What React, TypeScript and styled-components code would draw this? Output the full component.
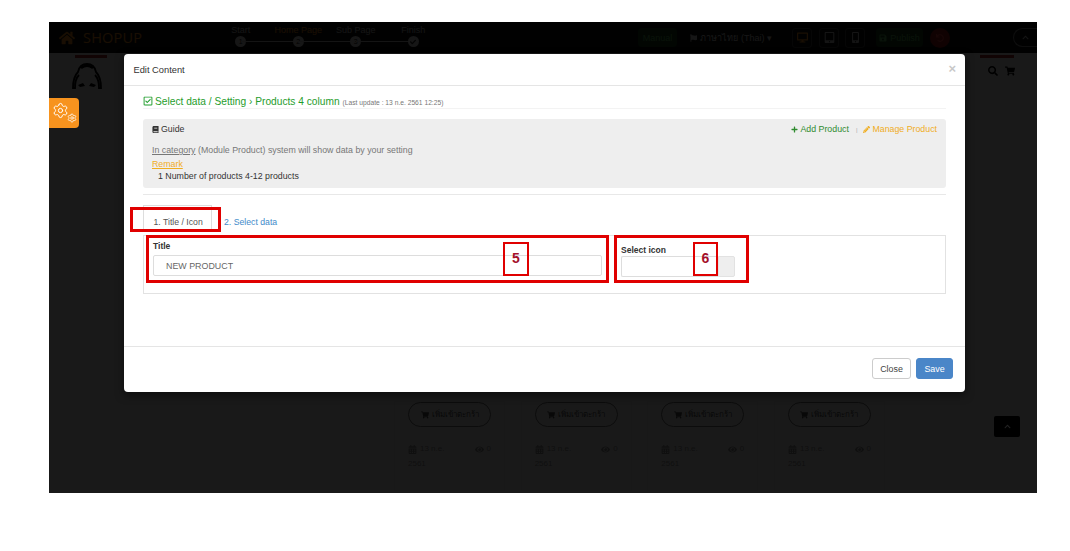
import React from "react";
import styled, { createGlobalStyle } from "styled-components";
import {
  FaHome, FaRegCheckSquare, FaBook, FaPlus, FaPencilAlt, FaShoppingCart, FaCalendarAlt, FaEye,
  FaFlag, FaDesktop, FaTabletAlt, FaMobileAlt, FaUndo, FaSave, FaChevronUp, FaSearch, FaCheck,
} from "react-icons/fa";
import { Settings } from "lucide-react";

const Global = createGlobalStyle`
  html, body { margin: 0; padding: 0; background: #fff; }
  body { font-family: "Liberation Sans", Arial, sans-serif; }
  * { box-sizing: border-box; }
`;

const Screen = styled.div`
  width: 1070px; height: 551px; padding: 22px 33px 58px 49px; background: #fff; overflow: hidden;
`;
const Stage = styled.div`
  position: relative; width: 988px; height: 471px; background: #fff; display: flex; flex-direction: column; overflow: hidden;
`;
const Nav = styled.div`
  height: 31px; background: #111; display: flex; align-items: center; padding: 0 0 0 10px; flex: none; color: #fff;
`;
const Logo = styled.div`
  width: 153px; display: flex; align-items: center; gap: 8px; color: #f7931e; font-size: 14.5px; letter-spacing: .2px; font-family: "Open Sans", sans-serif;
`;
const Stepper = styled.div`display: flex; width: 230px;`;
const Step = styled.div<{ $hot?: boolean }>`
  width: 57.6px; height: 31px; position: relative; display: flex; flex-direction: column; align-items: center; font-size: 9px; line-height: 12px; padding-top: 2px;
  color: ${(p) => (p.$hot ? "#f7931e" : "#ccc")}; white-space: nowrap;
`;
const StepDot = styled.span`
  position: relative; width: 11px; height: 11px; border-radius: 50%; background: #ddd; color: #222; font-size: 7px; line-height: 11px; text-align: center; margin-top: 0;
  display: flex; align-items: center; justify-content: center;
`;
const StepLine = styled.span`
  position: absolute; left: 50%; width: 100%; top: 19px; height: 1px; background: #ccc;
`;
const NavRight = styled.div`
  margin-left: auto; display: flex; align-items: center; height: 31px; font-size: 9px;
`;
const GreenBtn = styled.span<{ $w: number; $ml: number }>`
  width: ${(p) => p.$w}px; margin-left: ${(p) => p.$ml}px; height: 19px; border-radius: 4px; background: #14401a; color: #5cb85c; display: flex; align-items: center; justify-content: center; gap: 3px;
`;
const Lang = styled.span`
  width: 82px; margin-left: 13px; color: #ddd; display: flex; align-items: center; gap: 3px; white-space: nowrap; font-family: "Liberation Sans", "Noto Sans", sans-serif;
`;
const DeviceBtn = styled.span<{ $hot?: boolean; $ml: number }>`
  width: 20px; height: 20px; margin-left: ${(p) => p.$ml}px; border: 1px solid #444; border-radius: 3px; display: flex; align-items: center; justify-content: center; font-size: 11px;
  color: ${(p) => (p.$hot ? "#f7931e" : "#ccc")};
`;
const RoundRed = styled.span`
  width: 20px; height: 20px; margin-left: 7px; border-radius: 50%; background: #a01818; color: #e44; display: flex; align-items: center; justify-content: center; font-size: 8px;
`;
const Pill = styled.span`
  width: 24px; height: 19px; margin-left: 63px; border: 1px solid #888; border-right: 0; border-radius: 10px 0 0 10px; display: flex; align-items: center; justify-content: center; font-size: 7px; color: #ccc;
`;
const PageBody = styled.div`
  flex: 1; background: #fff; display: flex; flex-direction: column; padding-top: 348px; padding-left: 345px;
`;
const Products = styled.div`display: flex; gap: 15.67px;`;
const Card = styled.div`
  width: 111px; height: 90px; border: 1px solid #f0f0f0; padding: 0 0 0 13px; display: flex; flex-direction: column;
`;
const BuyBtn = styled.span`
  width: 83px; height: 25px; border: 1px solid #777; border-radius: 13px; display: flex; align-items: center; justify-content: center; gap: 3px; font-size: 8px; color: #555;
  font-family: "Noto Sans", "Liberation Sans", sans-serif; white-space: nowrap;
`;
const Meta = styled.div`
  margin-top: 15px; width: 83px; display: flex; justify-content: space-between; font-size: 8px; color: #999; line-height: 14px;
`;
const MetaItem = styled.span`display: flex; align-items: center; gap: 3px;`;
const MetaYear = styled.div`font-size: 8px; color: #999; line-height: 16px;`;
const Backdrop = styled.div`
  position: absolute; inset: 0; background: rgba(0, 0, 0, .9);
`;
const FaceWrap = styled.div`
  position: absolute; left: 17px; top: 36px; width: 42px; height: 38px; color: #000;
`;
const RedLabel = styled.div<{ $x: number; $w: number }>`
  position: absolute; left: ${(p) => p.$x}px; top: 33px; width: ${(p) => p.$w}px; height: 3px; background: #b03030;
`;
const GearTile = styled.div`
  position: absolute; left: 0; top: 76px; width: 30px; height: 30px; background: #f7931e; border-radius: 0 4px 4px 0; color: #fff;
`;
const BigGear = styled.span`position: absolute; left: 3px; top: 4px; display: flex;`;
const SmallGear = styled.span`position: absolute; left: 18px; top: 15px; display: flex;`;
const TopIcons = styled.div`
  position: absolute; left: 939px; top: 43px; height: 12px; display: flex; align-items: center; color: #000; font-size: 10px; gap: 7px;
`;
const UpBtn = styled.div`
  position: absolute; left: 945px; top: 394px; width: 26px; height: 21px; background: #000; color: #222; display: flex; align-items: center; justify-content: center; font-size: 7px; border-radius: 2px;
`;

const Modal = styled.div`
  position: absolute; left: 75px; top: 32px; width: 841px; height: 338px; background: #fff; border-radius: 4px; display: flex; flex-direction: column; box-shadow: 0 3px 8px rgba(0, 0, 0, .5);
`;
const ModalHeader = styled.div`
  height: 32px; flex: none; border-bottom: 1px solid #e5e5e5; display: flex; align-items: center; justify-content: space-between; padding: 0 9px 0 9.5px; font-size: 9.3px; color: #333;
`;
const CloseX = styled.span`font-size: 13px; font-weight: bold; color: #c8c8c8; margin-top: -3px;`;
const ModalBody = styled.div`flex: 1; padding: 0 19px; display: flex; flex-direction: column;`;
const Heading = styled.div`
  height: 23px; padding-top: 8px; color: #1f9d2c; font-size: 10.2px; line-height: 13px; display: flex; align-items: center; white-space: nowrap; border-bottom: 1px solid #f3f3f3; gap: 2px;
`;
const Small = styled.small`font-size: 6.7px; color: #777; margin-left: 1px; padding-top: 2px;`;
const Guide = styled.div`
  margin-top: 10px; height: 69px; background: #eee; border-radius: 3px; padding: 5px 9px; font-size: 8.8px; color: #333; position: relative; line-height: 11px;
`;
const GuideTop = styled.div`display: flex; justify-content: space-between; align-items: center; height: 11px;`;
const GuideTitle = styled.span`display: flex; align-items: center; gap: 2px;`;
const GuideActions = styled.span`display: flex; align-items: center;`;
const ActionLink = styled.span<{ $c: string }>`display: flex; align-items: center; gap: 2px; color: ${(p) => p.$c};`;
const Sep = styled.span`color: #aaa; font-size: 6px; margin: 2px 6px 0 7px;`;
const GuideLine = styled.div`margin-top: 10px; color: #777;`;
const Underlined = styled.u`color: #777;`;
const Remark = styled.div`margin-top: 3px; color: #f0ad1e; text-decoration: underline;`;
const Numbered = styled.div`margin-top: 1px; padding-left: 6px; color: #333;`;
const Rule = styled.div`height: 1px; background: #e8e8e8; margin-top: 6px; flex: none;`;
const Tabs = styled.div`display: flex; height: 40px; align-items: flex-end; padding-bottom: 4px; font-size: 8.7px; line-height: 11px;`;
const TabItem = styled.span<{ $active?: boolean }>`
  height: 26px; display: flex; align-items: flex-end; padding-bottom: 3px;
  color: ${(p) => (p.$active ? "#555" : "#428bca")};
  ${(p) => (p.$active ? "width: 69px; padding-left: 9.5px; border: 1px solid #ddd; border-bottom: 0; background: #fff; white-space: nowrap;" : "margin-left: 12px;")}
`;
const Panel = styled.div`
  height: 59px; border: 1px solid #e2e2e2; display: flex; padding: 4px 0 0 9px; gap: 19px;
`;
const Field = styled.div<{ $w: number }>`width: ${(p) => p.$w}px; display: flex; flex-direction: column;`;
const Label = styled.label<{ $low?: boolean }>`
  font-size: 8.5px; font-weight: bold; color: #333; line-height: 10px; height: 15px; padding-top: ${(p) => (p.$low ? 5 : 1)}px;
`;
const TitleInput = styled.div`
  height: 21px; border: 1px solid #ddd; border-radius: 2px; padding-left: 12px; display: flex; align-items: center; font-size: 8.9px; color: #666;
`;
const InputGroup = styled.div`display: flex; height: 21px; margin-top: 1px;`;
const IconInput = styled.div`flex: 1; border: 1px solid #ddd; border-right: 0; border-radius: 2px 0 0 2px;`;
const Addon = styled.div`width: 17px; background: #eee; border: 1px solid #e2e2e2; border-radius: 0 2px 2px 0;`;
const ModalFooter = styled.div`
  height: 46px; flex: none; border-top: 1px solid #e5e5e5; display: flex; justify-content: flex-end; align-items: flex-start; gap: 5px; padding: 11px 12px 0 0;
`;
const Button = styled.button<{ $primary?: boolean; $w: number }>`
  width: ${(p) => p.$w}px; height: 21px; padding: 0; border-radius: 3px; font-family: inherit; font-size: 8.9px;
  background: ${(p) => (p.$primary ? "#4a86c8" : "#fff")};
  color: ${(p) => (p.$primary ? "#fff" : "#444")};
  border: 1px solid ${(p) => (p.$primary ? "#4a86c8" : "#ccc")};
`;
const Annot = styled.div<{ $x: number; $y: number; $w: number; $h: number; $t?: number }>`
  position: absolute; left: ${(p) => p.$x}px; top: ${(p) => p.$y}px; width: ${(p) => p.$w}px; height: ${(p) => p.$h}px;
  border: ${(p) => p.$t ?? 3}px solid #e00000; display: flex; align-items: center; justify-content: center; padding-bottom: 2px;
  color: #a5102a; font-weight: bold; font-size: 14px; font-family: "Liberation Sans", sans-serif;
`;

const Face = () => (
  <svg width="42" height="38" viewBox="0 0 42 38" fill="none">
    <path d="M21 6c-5 0-8 3-9 8-3 3-5 9-5 16h2c0-6 1-10 4-13M21 6c5 0 8 3 9 8 3 3 5 9 5 16h-2c0-6-1-10-4-13" stroke="currentColor" strokeWidth="1.8" />
    <path d="M15 10c4-3 8-3 12 0" stroke="currentColor" strokeWidth="2.5" />
    <path d="M12 27l5-2 2 3-5 1zM30 27l-5-2-2 3 5 1z" fill="currentColor" />
  </svg>
);

const products = ["13 n.e.", "13 n.e.", "13 n.e.", "13 n.e."];

export default function App() {
  return (
    <>
      <Global />
      <Screen>
        <Stage>
          <Nav>
            <Logo><FaHome size={16} />SHOPUP</Logo>
            <Stepper>
              <Step>Start<StepDot>1</StepDot><StepLine /></Step>
              <Step $hot>Home Page<StepDot>2</StepDot><StepLine /></Step>
              <Step>Sub Page<StepDot>3</StepDot><StepLine /></Step>
              <Step>Finish<StepDot><FaCheck size={6} /></StepDot></Step>
            </Stepper>
            <NavRight>
              <GreenBtn $w={39} $ml={0}>Manual</GreenBtn>
              <Lang><FaFlag size={8} />ภาษาไทย (Thai) ▾</Lang>
              <DeviceBtn $hot $ml={20}><FaDesktop /></DeviceBtn>
              <DeviceBtn $ml={7}><FaTabletAlt /></DeviceBtn>
              <DeviceBtn $ml={6}><FaMobileAlt /></DeviceBtn>
              <GreenBtn $w={47} $ml={11}><FaSave size={8} />Publish</GreenBtn>
              <RoundRed><FaUndo /></RoundRed>
              <Pill><FaChevronUp /></Pill>
            </NavRight>
          </Nav>
          <PageBody>
            <Products>
              {products.map((d, i) => (
                <Card key={i}>
                  <BuyBtn><FaShoppingCart size={8} />เพิ่มเข้าตะกร้า</BuyBtn>
                  <Meta>
                    <MetaItem><FaCalendarAlt size={9} />{d}</MetaItem>
                    <MetaItem><FaEye size={9} />0</MetaItem>
                  </Meta>
                  <MetaYear>2561</MetaYear>
                </Card>
              ))}
            </Products>
          </PageBody>
          <RedLabel $x={26} $w={32} />
          <RedLabel $x={931} $w={34} />
          <FaceWrap><Face /></FaceWrap>
          <TopIcons><FaSearch /><FaShoppingCart /></TopIcons>
          <Backdrop />
          <UpBtn><FaChevronUp /></UpBtn>
          <GearTile>
            <BigGear><Settings size={17} strokeWidth={1.4} /></BigGear>
            <SmallGear><Settings size={10} strokeWidth={1.8} /></SmallGear>
          </GearTile>
          <Modal>
            <ModalHeader>
              <span>Edit Content</span>
              <CloseX>×</CloseX>
            </ModalHeader>
            <ModalBody>
              <Heading>
                <FaRegCheckSquare size={10} />
                <span>Select data / Setting › Products 4 column</span>
                <Small>(Last update : 13 n.e. 2561 12:25)</Small>
              </Heading>
              <Guide>
                <GuideTop>
                  <GuideTitle><FaBook size={7} />Guide</GuideTitle>
                  <GuideActions>
                    <ActionLink $c="#2e8b2e"><FaPlus size={7} />Add Product</ActionLink>
                    <Sep>|</Sep>
                    <ActionLink $c="#f0ad1e"><FaPencilAlt size={7} />Manage Product</ActionLink>
                  </GuideActions>
                </GuideTop>
                <GuideLine><Underlined>In category</Underlined> (Module Product) system will show data by your setting</GuideLine>
                <Remark>Remark</Remark>
                <Numbered>1 Number of products 4-12 products</Numbered>
              </Guide>
              <Rule />
              <Tabs>
                <TabItem $active>1. Title / Icon</TabItem>
                <TabItem>2. Select data</TabItem>
              </Tabs>
              <Panel>
                <Field $w={449}>
                  <Label>Title</Label>
                  <TitleInput>NEW PRODUCT</TitleInput>
                </Field>
                <Field $w={114}>
                  <Label $low>Select icon</Label>
                  <InputGroup>
                    <IconInput />
                    <Addon />
                  </InputGroup>
                </Field>
              </Panel>
            </ModalBody>
            <ModalFooter>
              <Button $w={39}>Close</Button>
              <Button $primary $w={37}>Save</Button>
            </ModalFooter>
          </Modal>
          <Annot $x={81} $y={185} $w={91} $h={25} />
          <Annot $x={97} $y={213} $w={463} $h={48} />
          <Annot $x={565} $y={213} $w={135} $h={48} />
          <Annot $x={454} $y={220} $w={26} $h={34} $t={2}>5</Annot>
          <Annot $x={644} $y={220} $w={25} $h={34} $t={2}>6</Annot>
        </Stage>
      </Screen>
    </>
  );
}
